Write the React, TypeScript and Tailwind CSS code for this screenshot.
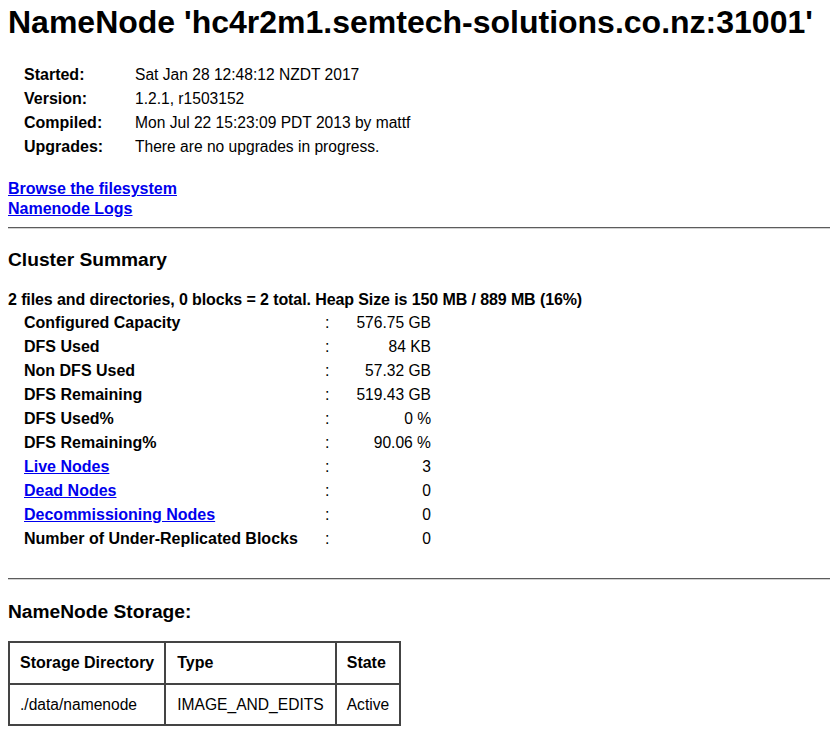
import React from "react";

const info = [
  ["Started:", "Sat Jan 28 12:48:12 NZDT 2017"],
  ["Version:", "1.2.1, r1503152"],
  ["Compiled:", "Mon Jul 22 15:23:09 PDT 2013 by mattf"],
  ["Upgrades:", "There are no upgrades in progress."],
];

const summary: { label: string; value: string; link?: boolean }[] = [
  { label: "Configured Capacity", value: "576.75 GB" },
  { label: "DFS Used", value: "84 KB" },
  { label: "Non DFS Used", value: "57.32 GB" },
  { label: "DFS Remaining", value: "519.43 GB" },
  { label: "DFS Used%", value: "0 %" },
  { label: "DFS Remaining%", value: "90.06 %" },
  { label: "Live Nodes", value: "3", link: true },
  { label: "Dead Nodes", value: "0", link: true },
  { label: "Decommissioning Nodes", value: "0", link: true },
  { label: "Number of Under-Replicated Blocks", value: "0" },
];

function Rule() {
  return <div className="h-0 w-full border-t border-b border-t-[#5c5c5c] border-b-[#d2d2d2]" />;
}

export default function App() {
  return (
    <div className="min-h-[752px] bg-white pl-2 text-black font-['Liberation_Sans',Arial,sans-serif] text-[16px]">
      <h1 className="pt-1 text-[32px] font-bold leading-[36px] whitespace-nowrap">
        NameNode 'hc4r2m1.semtech-solutions.co.nz:31001'
      </h1>

      <div className="mt-[23px] pl-4 grid grid-cols-[111px_1fr]">
        {info.map(([k, v]) => (
          <React.Fragment key={k}>
            <div className="font-bold leading-[24px]">{k}</div>
            <div className="leading-[24px] text-[15.6px]">{v}</div>
          </React.Fragment>
        ))}
      </div>

      <div className="mt-5 flex flex-col items-start font-bold leading-[20px]">
        <a href="#" className="text-[#0000ee] underline">Browse the filesystem</a>
        <a href="#" className="text-[#0000ee] underline">Namenode Logs</a>
      </div>

      <div className="mt-[8px]">
        <Rule />
      </div>

      <h2 className="mt-[19px] text-[19.2px] font-bold leading-[24px]">Cluster Summary</h2>

      <div className="mt-4 font-bold leading-[23px] whitespace-nowrap tracking-[-0.1px]">
        2 files and directories, 0 blocks = 2 total. Heap Size is 150 MB / 889 MB (16%)
      </div>

      <div className="pl-4 grid grid-cols-[301px_30px_76px]">
        {summary.map((r) => (
          <React.Fragment key={r.label}>
            <div className="font-bold leading-[24px] whitespace-nowrap">
              {r.link ? (
                <a href="#" className="text-[#0000ee] underline">{r.label}</a>
              ) : (
                r.label
              )}
            </div>
            <div className="leading-[24px]">:</div>
            <div className="leading-[24px] text-right whitespace-nowrap text-[15.6px]">{r.value}</div>
          </React.Fragment>
        ))}
      </div>

      <div className="mt-[27px]">
        <Rule />
      </div>

      <h2 className="mt-[20px] text-[19.2px] font-bold leading-[24px]">NameNode Storage:</h2>

      <table className="mt-[17px] border border-[#444] border-separate border-spacing-0">
        <thead>
          <tr className="h-[42px]">
            <th className="border border-[#444] px-[10px] text-left font-bold">Storage Directory</th>
            <th className="border border-[#444] px-[11px] text-left font-bold">Type</th>
            <th className="border border-[#444] px-[10px] text-left font-bold">State</th>
          </tr>
        </thead>
        <tbody className="text-[15.6px]">
          <tr className="h-[41px]">
            <td className="border border-[#444] px-[10px]">./data/namenode</td>
            <td className="border border-[#444] px-[11px]">IMAGE_AND_EDITS</td>
            <td className="border border-[#444] px-[10px]">Active</td>
          </tr>
        </tbody>
      </table>
    </div>
  );
}
